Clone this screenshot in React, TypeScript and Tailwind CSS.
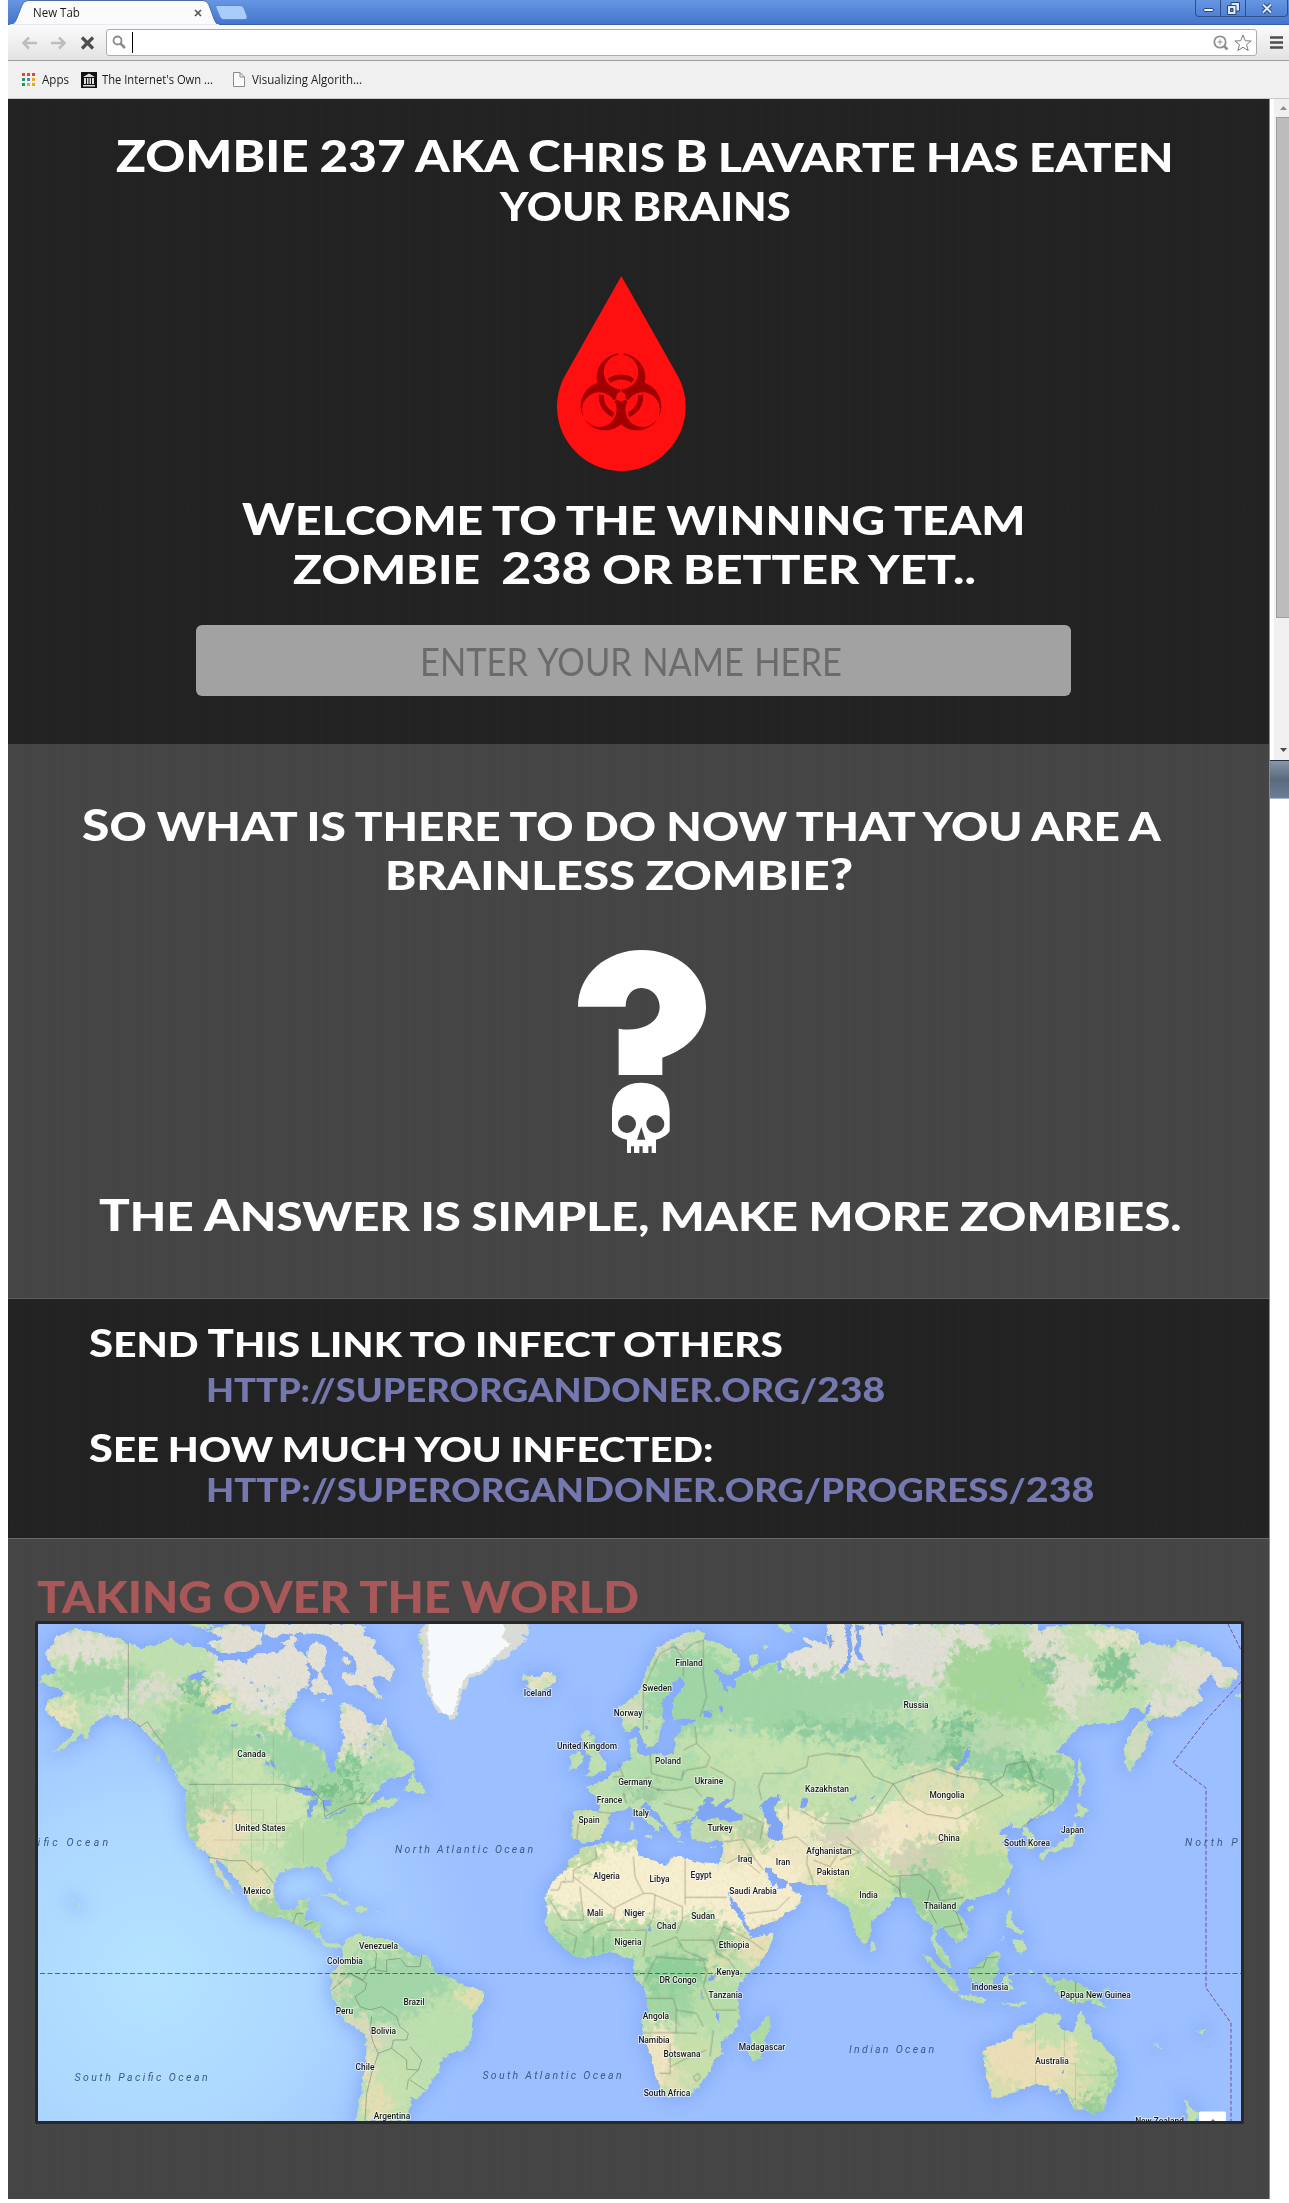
import React, { useLayoutEffect, useRef, useState } from "react";

/* One line of text, stretched horizontally so that it spans exactly `width` pixels. */
function Line({ width, children, className = "" }: { width: number; children: React.ReactNode; className?: string }) {
  const ref = useRef<HTMLSpanElement>(null);
  const [stretch, setStretch] = useState(1);
  useLayoutEffect(() => {
    if (ref.current) setStretch(width / ref.current.offsetWidth);
  }, [width]);
  return (
    <span className={"block whitespace-pre " + className} style={{ width }}>
      <span ref={ref} className="inline-block origin-left" style={{ transform: `scaleX(${stretch})` }}>
        {children}
      </span>
    </span>
  );
}

const Big = ({ children }: { children: React.ReactNode }) => <span className="text-[1.08em] leading-none">{children}</span>;

type Region = "a" | "b" | "c";
const T: Record<Region, string> = {
  a: "translate(-8 -14) scale(.33333)",
  b: "translate(392 -14) scale(.33333)",
  c: "translate(802 -14) scale(.33333 .37807)",
};

const land: [Region, string][] = [
  // North America
  ["a", "M45 130 60 110 72 98 75 80 110 70 125 62 140 52 150 62 180 62 210 70 245 82 270 88 295 98 320 108 340 118 352 105 375 108 385 98 400 95 410 88 425 85 440 100 460 108 470 98 490 110 515 112 540 125 565 140 560 155 590 150 625 150 650 165 655 148 670 150 690 160 725 165 730 150 740 140 760 145 770 130 785 150 800 160 815 155 830 170 840 190 835 230 815 235 800 245 805 262 790 280 770 300 765 345 780 360 790 385 815 392 840 400 865 412 885 425 890 460 905 488 920 480 918 465 915 450 928 425 935 400 945 385 930 350 935 310 930 285 945 280 965 285 985 300 1000 305 1010 330 1035 350 1050 345 1065 325 1075 350 1085 370 1090 390 1100 400 1110 420 1130 430 1150 450 1155 480 1130 492 1110 500 1080 505 1060 520 1040 545 1025 565 1020 580 1040 575 1060 558 1070 570 1110 565 1095 582 1080 595 1060 590 1040 600 1020 605 1000 620 985 640 975 650 955 660 950 670 950 690 945 710 920 728 900 740 885 765 890 780 900 790 905 815 890 810 880 790 875 780 865 768 850 770 830 770 810 775 790 773 770 780 755 785 740 800 733 820 730 840 740 880 760 900 780 900 800 895 808 870 838 868 835 885 830 905 820 930 850 935 875 935 872 960 875 985 900 1005 920 998 935 1005 940 1020 920 1010 905 1015 880 1005 870 985 850 975 840 960 830 955 810 948 790 940 760 925 725 918 700 910 670 898 660 890 655 865 645 845 630 825 615 800 600 785 575 755 560 750 565 770 575 790 590 812 600 825 610 850 590 835 580 815 560 795 550 770 540 750 525 720 500 715 490 690 475 670 470 650 465 625 470 600 465 565 472 540 460 530 445 510 435 490 425 465 410 440 400 420 370 395 350 370 330 350 310 335 295 325 280 325 260 315 240 320 225 315 210 330 195 335 180 360 175 385 160 380 150 370 140 385 130 395 100 415 60 430 80 415 100 400 125 378 135 360 110 355 95 345 80 335 75 320 50 310 45 295 55 270 75 262 95 260 100 240 85 235 60 228 30 215 35 195 60 192 80 185 75 175 60 165Z"],
  ["a", "M530 60 570 50 600 42 650 45 670 60 695 70 698 90 690 105 670 110 650 125 600 130 575 128 555 115 535 102 540 92 580 88 560 75ZM470 42 540 42 555 50 520 56ZM710 42 850 42 830 55 790 75 760 70 730 85 700 70ZM650 148 690 130 740 128 770 110 750 98 770 95 790 75 800 90 790 110 820 130 835 160 800 175 740 180 690 180ZM770 95 790 80 798 100Z"],
  ["a", "M780 42 960 42 1005 50 1000 75 1040 90 1030 110 1040 130 1070 150 1095 180 1085 195 1080 215 1060 200 1040 195 1025 205 1035 235 1060 268 1040 262 1020 245 1000 230 975 222 955 225 935 205 940 190 975 192 985 175 975 150 960 130 940 120 920 95 900 80 870 72 820 70 800 60ZM845 210 858 205 870 185 885 210 905 235 905 255 880 248 855 252 842 240ZM835 110 860 95 885 105 892 130 885 165 868 188 850 175 830 150ZM935 150 945 138 962 150 950 165ZM872 270 885 265 880 278Z"],
  ["a", "M1123 540 1135 515 1152 488 1158 512 1175 520 1187 548 1165 550 1150 545ZM870 855 900 850 930 862 962 882 940 885 905 862ZM975 895 990 888 1018 895 1000 907 980 905ZM1165 80 1185 65 1195 90 1190 108 1170 105ZM380 440 390 440 388 462ZM1035 903 1050 903 1048 909ZM142 880 156 885 150 895ZM122 868 130 868 130 873ZM925 835 935 838 930 842Z"],
  // South America
  ["a", "M900 1095 920 1075 930 1060 940 1035 935 1015 950 990 965 980 990 968 1000 980 1012 975 1035 988 1060 985 1090 990 1105 1005 1130 1025 1160 1040 1190 1033 1205 1060 1215 1090 1260 1100 1285 1118 1310 1130 1340 1135 1358 1145 1365 1165 1345 1195 1328 1215 1325 1250 1325 1280 1312 1305 1300 1320 1265 1328 1240 1345 1228 1365 1225 1390 1205 1410 1195 1435 1180 1450 1162 1465 1138 1460 1148 1485 1135 1500 1135 1540 975 1540 978 1510 985 1490 995 1440 1000 1400 1008 1350 1010 1290 1000 1270 970 1250 945 1235 930 1205 920 1180 905 1155 900 1140 908 1120Z"],
  // Iceland, Britain, Ireland and Mediterranean islands
  ["b", "M275 205 280 190 300 198 315 202 330 198 345 188 360 185 378 200 378 215 360 230 330 243 305 238 285 228 298 218ZM455 378 465 362 482 362 478 375 495 380 488 395 490 412 505 425 515 442 532 462 528 480 500 492 465 500 485 482 470 475 480 458 485 440 470 430 460 405ZM420 435 445 423 460 438 455 455 445 472 415 480 425 460ZM600 640 612 632 610 660 602 662ZM645 680 670 672 665 690ZM740 690 768 698 745 700ZM840 712 858 708 850 715ZM960 135 980 132 985 155 970 178 960 160ZM1000 105 1020 108 1005 120ZM1040 42 1075 42 1090 65 1065 68ZM445 282 450 284 448 288Z"],
  // Europe, Near East and western Russia
  ["b", "M575 325 565 290 590 275 610 260 630 240 640 210 650 180 665 150 680 120 710 95 735 88 760 70 785 65 810 60 828 72 820 85 845 95 870 100 900 115 920 135 930 155 928 180 905 192 880 190 862 178 848 180 865 200 872 220 880 242 892 245 890 225 915 238 920 215 915 205 945 190 960 180 965 190 990 175 1015 160 1045 155 1040 185 1060 180 1050 155 1080 130 1120 115 1150 110 1125 95 1120 80 1140 88 1180 100 1195 110 1205 90 1195 60 1205 42 1245 42 1252 80 1245 110 1260 140 1300 140 1300 880 1248 890 1225 870 1215 845 1200 825 1165 825 1130 825 1110 815 1085 820 1060 808 1040 800 1020 770 1003 772 1012 800 1030 832 1040 820 1045 838 1060 835 1078 815 1085 840 1115 855 1110 880 1095 895 1070 910 1040 930 1000 945 960 960 950 945 945 925 930 895 905 865 885 830 870 790 862 770 872 750 880 720 880 695 850 690 830 700 805 690 785 685 780 660 790 640 760 635 740 645 745 660 755 672 745 690 735 680 720 665 708 645 695 628 675 605 655 580 640 578 635 590 660 618 685 635 700 650 688 648 685 672 668 650 640 625 615 605 600 590 575 605 550 605 535 625 540 640 520 655 515 680 495 695 475 695 455 700 445 688 425 685 425 650 432 620 425 605 450 600 500 605 508 585 500 560 480 545 470 530 500 520 530 510 545 490 565 480 585 455 605 450 600 420 597 390 618 380 622 405 620 430 650 438 680 430 705 438 730 428 738 400 732 385 750 372 755 350 790 340 800 330 760 325 730 330 725 300 735 265 755 240 768 215 750 202 730 215 715 250 692 280 698 310 702 335 690 360 685 390 670 410 650 412 640 395 632 372 620 345 605 360 585 368Z"],
  // Africa and Madagascar
  ["b", "M455 715 470 710 500 705 525 698 560 695 590 695 620 685 625 700 618 715 628 735 650 745 680 755 710 770 720 750 740 738 765 745 800 755 830 762 860 757 870 790 890 830 895 855 905 890 925 915 940 945 955 965 965 985 1000 978 1030 970 1028 990 1010 1030 980 1070 950 1098 930 1120 918 1150 925 1185 928 1225 918 1260 895 1280 870 1295 878 1330 850 1350 845 1375 825 1405 800 1435 780 1455 750 1458 710 1462 698 1450 690 1430 675 1395 665 1340 650 1300 638 1270 635 1235 655 1200 650 1165 640 1130 612 1098 612 1065 608 1045 585 1045 560 1030 530 1025 500 1038 470 1042 440 1045 420 1030 400 1010 380 990 355 965 345 930 355 910 345 870 355 840 370 815 395 790 415 770 415 750 440 735ZM960 1275 985 1255 1000 1230 1015 1215 1022 1245 1005 1295 990 1345 970 1355 955 1330 965 1300Z"],
  // Asia
  ["c", "M-40 38 590 38 605 62 620 45 700 38 780 38 830 48 890 55 900 78 900 90 930 85 960 92 975 92 1000 100 1010 80 1035 82 1060 90 1085 100 1100 110 1130 125 1150 150 1175 152 1198 170 1180 185 1165 205 1135 205 1125 185 1115 165 1105 180 1085 195 1075 215 1090 240 1060 255 1040 262 1020 280 1000 285 970 280 930 290 920 300 935 325 918 350 910 380 895 390 880 415 868 430 855 405 852 370 865 335 890 305 915 285 935 255 925 245 910 275 895 260 870 262 850 290 820 300 780 300 720 305 690 335 670 355 650 375 685 385 703 400 705 440 690 475 680 490 660 515 640 530 610 540 590 550 565 555 555 570 575 590 595 620 580 632 562 630 565 610 550 595 545 578 515 575 520 562 495 575 475 590 500 595 485 615 510 635 500 650 515 680 510 700 490 730 470 745 430 755 400 765 380 768 365 775 350 800 370 815 385 840 383 862 365 875 350 882 340 868 325 862 320 850 305 838 290 850 285 875 305 895 325 920 335 947 315 940 298 920 285 895 275 870 280 845 270 820 250 822 240 810 225 790 215 765 200 760 180 758 160 765 150 785 130 800 110 810 95 825 95 850 85 870 70 885 60 875 50 860 40 830 28 800 22 770 -10 770 -40 750Z"],
  ["c", "M90 885 98 875 108 895 98 907 90 900ZM715 400 722 385 725 420 738 450 725 465 722 495 714 490 718 450 712 430ZM700 545 715 535 712 510 730 522 748 530 725 545ZM600 645 620 632 650 628 660 612 685 605 695 575 705 560 712 580 702 605 698 628 670 630 645 642 625 640 608 662 598 655ZM500 745 507 730 510 738 503 755ZM380 788 400 780 400 790 385 797ZM500 797 517 795 515 820 530 840 550 850 542 860 520 850 505 840 497 830ZM520 870 550 875 558 900 540 910 525 895ZM470 882 495 860 490 868ZM248 910 270 918 290 938 325 960 350 990 355 1010 335 1008 310 985 285 955ZM353 1015 380 1018 410 1022 440 1030 430 1038 390 1034 362 1028ZM445 1038 500 1042 530 1040 562 1035 540 1052 500 1045ZM385 948 405 945 430 930 455 905 472 902 482 915 470 935 478 950 462 975 455 995 430 990 400 985 390 970ZM485 980 500 965 540 955 500 972 520 980 505 985 520 1002 495 1008ZM608 965 635 970 640 985 670 975 705 985 745 1000 765 1020 798 1050 770 1045 745 1032 715 1040 690 1040 670 1020 645 1010 650 995 620 985ZM570 948 580 955 575 965ZM780 1005 815 1000 800 1010ZM940 1145 970 1162 955 1160Z"],
  // Australia and New Zealand
  ["c", "M430 1165 450 1152 480 1145 510 1138 522 1115 545 1098 580 1090 595 1072 620 1065 660 1070 665 1080 650 1098 670 1110 700 1118 710 1090 718 1060 730 1072 735 1090 750 1100 758 1132 785 1145 800 1165 825 1190 833 1225 820 1265 800 1295 795 1320 760 1335 730 1322 705 1325 692 1305 685 1290 670 1265 650 1285 655 1265 635 1275 625 1258 590 1252 560 1262 530 1275 500 1280 480 1292 455 1290 452 1265 440 1235 432 1200ZM1030 1293 1042 1302 1050 1318 1080 1330 1070 1345 1060 1360 1035 1360 1045 1340ZM1070 1115 1100 1108 1085 1125ZM1180 222 1203 225 1203 235Z"],
];

const water: [Region, string][] = [
  ["a", "M788 530 810 532 830 525 850 545 868 560 850 558 820 555 800 545ZM835 575 865 562 858 585 848 590 845 622 832 625ZM878 570 900 570 905 585 890 590 890 608 880 595ZM880 625 915 610 948 595 945 603 910 618 882 630ZM475 215 485 195 520 180 530 185 510 195 525 205 500 212 490 205ZM545 312 560 290 590 282 605 278 595 295 570 308ZM595 355 610 340 630 345ZM705 450 720 460 715 470ZM722 445 735 465 738 480 725 465ZM680 370 692 375 685 390ZM1000 225 1008 225 1006 232ZM575 625 585 632 582 640Z"],
  ["a", "M660 215 666 215 664 222ZM680 240 688 238 684 246ZM700 225 706 230 700 234ZM715 255 722 252 720 262ZM690 270 698 268 694 278ZM728 275 734 280 728 284ZM640 200 646 204 640 206ZM745 200 752 202 746 208ZM705 290 712 292 708 300ZM1010 370 1018 372 1012 378ZM1035 385 1042 390 1036 394ZM1000 400 1008 400 1004 408ZM1060 400 1066 404 1060 408ZM1020 440 1030 442 1022 448Z"],
  ["b", "M798 610 812 590 830 560 850 568 840 578 860 590 875 575 895 568 915 560 895 580 885 590 910 600 935 612 938 630 905 638 875 628 850 625 820 632 800 625ZM990 585 1010 570 1045 555 1052 572 1030 590 1040 620 1058 640 1055 660 1062 688 1040 692 1015 685 1012 660 1020 645 1005 620ZM1110 590 1118 562 1132 565 1130 595ZM820 305 835 298 848 312 842 325 822 320ZM865 290 875 285 880 305 870 300ZM895 355 908 360 900 366ZM650 938 665 960 660 965ZM838 1100 855 1098 852 1110 838 1112ZM812 1135 818 1150 822 1170 815 1160ZM862 1205 868 1215 866 1240 860 1225ZM645 345 655 350 650 362ZM1190 80 1200 70 1210 95 1200 120ZM800 602 792 630 770 640 785 628Z"],
  ["c", "M15 38 35 38 32 70 38 100 32 130 20 162 0 168 10 145 25 130 22 90ZM45 38 75 45 55 55 65 80 60 110 75 138 55 130 42 105 50 85ZM118 38 128 42 125 72 120 60ZM338 420 365 400 382 365 392 362 388 385 370 410 350 425ZM540 180 550 205 545 200ZM30 500 50 488 48 500 35 508ZM200 565 205 570 200 573ZM663 1225 672 1218 672 1230ZM55 542 75 545 60 548ZM215 440 228 436 220 446ZM90 500 105 490 100 500Z"],
];

/* Terrain tints: region, cx, cy, rx, ry, colour. */
const tints: [Region, number, number, number, number, string][] = [
  ["a", 160, 110, 130, 45, "#e2dfd3"], ["a", 220, 210, 140, 50, "#a3d6a6"], ["a", 90, 320, 60, 45, "#e9e2bd"], ["a", 380, 240, 80, 35, "#dbdccb"], ["a", 260, 300, 60, 14, "#e2e2d8"],
  ["a", 350, 370, 60, 20, "#cfd8c4"], ["a", 500, 240, 50, 32, "#7fc394"], ["a", 720, 200, 170, 110, "#e4e1d7"], ["a", 620, 90, 110, 50, "#e2dfd3"],
  ["a", 860, 60, 200, 60, "#e4e1d7"], ["a", 1000, 170, 120, 110, "#e4e1d7"], ["a", 1000, 350, 100, 85, "#e6e1d2"], ["a", 870, 150, 80, 120, "#e4e1d7"],
  ["a", 570, 260, 50, 25, "#eae3bf"], ["a", 740, 350, 50, 22, "#eae3bf"], ["a", 840, 405, 55, 14, "#eee5b8"], ["a", 700, 410, 160, 55, "#9fd5a7"],
  ["a", 500, 330, 90, 60, "#abd9a0"], ["a", 450, 400, 70, 80, "#a2d3a4"], ["a", 640, 475, 90, 50, "#cbe2b1"], ["a", 850, 470, 130, 50, "#9ed4a5"],
  ["a", 930, 545, 90, 25, "#73bd88"], ["a", 960, 470, 45, 22, "#7cc290"], ["a", 1050, 390, 50, 32, "#b9d9b3"], ["a", 1040, 490, 80, 30, "#a5d8a9"],
  ["a", 720, 620, 130, 90, "#cfe5b4"], ["a", 570, 660, 80, 95, "#e9dfb9"], ["a", 485, 610, 22, 100, "#9fcf9f"], ["a", 560, 575, 50, 30, "#b0d3a5"],
  ["a", 860, 700, 110, 80, "#b2dba6"], ["a", 940, 600, 60, 50, "#a0d2a0"], ["a", 640, 790, 60, 60, "#d9dfb0"], ["a", 720, 900, 90, 30, "#a6d3a0"], ["a", 690, 820, 30, 50, "#e8dfb5"], ["a", 850, 930, 60, 50, "#a4d6a1"],
  ["a", 1080, 1130, 190, 100, "#a2d6a9"], ["a", 1060, 1010, 110, 30, "#bddfad"], ["a", 1260, 1250, 100, 110, "#bce0ae"], ["a", 1330, 1160, 35, 35, "#dfdfae"],
  ["a", 1030, 1290, 40, 40, "#d6d9bb"], ["a", 985, 1250, 50, 20, "#dfd9bd"], ["a", 1020, 1420, 20, 120, "#e7dfb8"], ["a", 1090, 1430, 60, 90, "#c6e2ae"], ["a", 1050, 1490, 30, 60, "#e5deb2"], ["a", 925, 1110, 16, 60, "#d9dcb8"],
  ["b", 720, 110, 80, 40, "#d3dcc0"], ["b", 610, 300, 40, 40, "#d5dcbf"], ["b", 780, 240, 130, 130, "#9fd6a5"], ["b", 330, 215, 50, 25, "#e6e3c4"],
  ["b", 1060, 270, 220, 100, "#a0d5a6"], ["b", 1150, 140, 90, 50, "#e5e3d9"], ["b", 1220, 80, 40, 60, "#e5e3d9"], ["b", 1140, 350, 110, 22, "#8ccb9c"], ["b", 1000, 440, 220, 60, "#c6e2ae"],
  ["b", 1150, 510, 140, 70, "#c4e1af"], ["b", 700, 490, 150, 60, "#b4dda9"], ["b", 640, 550, 60, 22, "#9dcaa0"], ["b", 480, 650, 60, 40, "#d0dfae"],
  ["b", 860, 655, 100, 30, "#c0d8aa"], ["b", 1090, 640, 90, 50, "#efe8c4"], ["b", 1080, 750, 110, 70, "#f0e7c4"], ["b", 1200, 600, 60, 20, "#b9d8a4"], ["b", 980, 660, 50, 30, "#b2cfa4"], ["b", 1220, 690, 60, 40, "#d8d3bb"],
  ["b", 980, 850, 150, 120, "#f6edcd"], ["b", 920, 720, 50, 40, "#e8e3b9"], ["b", 990, 690, 20, 40, "#b8d3a4"], ["b", 1200, 790, 60, 60, "#ebe3bb"],
  ["b", 620, 820, 310, 110, "#f8efcf"], ["b", 440, 740, 60, 35, "#bfdaa4"], ["b", 560, 700, 80, 14, "#b8d8a2"], ["b", 620, 985, 340, 50, "#b6dca8"], ["b", 460, 1010, 100, 40, "#9ed4a0"],
  ["b", 740, 1090, 110, 60, "#8fcf99"], ["b", 720, 1180, 90, 50, "#a0d5a2"], ["b", 930, 990, 110, 40, "#cde0ab"], ["b", 990, 1010, 60, 60, "#e7dfb5"], ["b", 880, 1000, 40, 60, "#a6d2a0"], ["b", 870, 1180, 80, 90, "#b7dda9"], ["b", 870, 1060, 40, 30, "#dadfae"],
  ["b", 685, 1340, 50, 110, "#f0e4c1"], ["b", 790, 1350, 70, 90, "#c8e0ac"], ["b", 730, 1420, 40, 30, "#dfdfb4"], ["b", 1000, 1280, 45, 80, "#addaa3"], ["b", 130, 1160, 40, 40, "#e4dfae"],
  ["c", 100, 90, 240, 80, "#e5e3d9"], ["c", 230, 130, 90, 90, "#e0ded6"], ["c", 380, 70, 60, 50, "#e2e0d6"], ["c", 60, 220, 170, 60, "#a2d5a8"], ["c", 90, 320, 150, 28, "#90cca0"],
  ["c", 370, 170, 60, 80, "#a5d59a"], ["c", 500, 190, 140, 110, "#a3d597"], ["c", 590, 260, 90, 50, "#a5d699"], ["c", 300, 370, 150, 55, "#a9d6aa"], ["c", 360, 305, 60, 20, "#76bf8c"], ["c", 340, 380, 50, 30, "#80c492"], ["c", 150, 390, 60, 16, "#84c696"], ["c", 470, 330, 80, 40, "#bcd9b0"], ["c", 620, 90, 60, 60, "#e0dfcf"], ["c", 700, 200, 70, 80, "#dedfcd"], ["c", 620, 150, 30, 40, "#8cc99a"],
  ["c", 830, 70, 90, 25, "#e6e2cb"], ["c", 830, 160, 60, 48, "#83c594"], ["c", 960, 150, 90, 60, "#d2dec4"], ["c", 1090, 160, 110, 60, "#e1dfd2"], ["c", 1000, 250, 90, 35, "#e0dfd2"], ["c", 890, 340, 40, 70, "#d1dcc0"], ["c", 760, 260, 60, 35, "#c9dbba"],
  ["c", 50, 420, 120, 50, "#c7e2af"], ["c", 480, 410, 90, 40, "#9ad0a2"], ["c", 560, 430, 40, 45, "#7dc28d"], ["c", 650, 450, 50, 60, "#98cf9f"], ["c", 300, 470, 120, 60, "#dfe0b4"], ["c", 540, 500, 60, 40, "#cfe2ad"], ["c", 430, 530, 60, 50, "#cce0ac"],
  ["c", 230, 570, 190, 60, "#f2e7c4"], ["c", 130, 610, 80, 55, "#f3e9c8"], ["c", 80, 600, 50, 40, "#dfd9bd"], ["c", 300, 650, 120, 50, "#c3d5ac"], ["c", 420, 620, 110, 50, "#cfdfaa"], ["c", 420, 690, 100, 60, "#b6dca2"], ["c", 210, 660, 60, 30, "#d5d2b8"], ["c", 320, 720, 50, 35, "#dadcae"],
  ["c", 80, 720, 90, 50, "#cde2a8"], ["c", 60, 820, 50, 60, "#b5dca0"], ["c", 10, 660, 30, 40, "#f0e8bb"], ["c", 250, 740, 80, 60, "#9dcf9c"], ["c", 330, 820, 70, 60, "#a5d6a2"], ["c", 430, 950, 60, 60, "#9fd5a2"], ["c", 300, 960, 70, 60, "#a8d8a5"], ["c", 700, 1010, 110, 50, "#a6d7a2"],
  ["c", 580, 1190, 150, 90, "#ecdfb7"], ["c", 640, 1110, 80, 45, "#c6e0ae"], ["c", 770, 1200, 60, 110, "#c3e0aa"], ["c", 750, 1310, 50, 30, "#97cc97"], ["c", 700, 1260, 40, 50, "#dbdfae"], ["c", 470, 1265, 50, 35, "#d9deae"], ["c", 820, 1230, 15, 60, "#9fd29c"],
];

const borders: [Region, string][] = [
  ["a", "M295 98V322L330 350 352 335 375 370 405 408M475 523H760L800 535 845 540 880 575 885 620 940 590 975 580H1000L1030 545M535 742 600 752 645 752 680 785 695 775 730 818M790 940 800 910H820M820 950 850 935M1010 1000 1040 1030 1035 1080 1070 1085 1070 1050 1110 1045 1130 1070 1170 1070 1175 1035M930 1095 960 1090 1000 1110 1015 1080 1040 1070M905 1140 940 1110 960 1090 1010 1120 1005 1140 975 1160 990 1190 1020 1200 1055 1190 1100 1220 1110 1250 1135 1270 1130 1290 1090 1290 1085 1315 1045 1330 1030 1300 1020 1260 1025 1220M1085 1315 1130 1350 1130 1378 1165 1380 1175 1350 1140 1310M1165 1380 1135 1410 1130 1440M1140 1410 1185 1440M1045 1330 1025 1390 1010 1450 1005 1530"],
  ["b", "M640 360 640 240 665 180 690 130 730 110 760 125 790 100 820 90M820 90 820 200 830 260 810 320M735 110 760 150V200M795 350 800 400 840 440 830 470 770 480 755 500M760 420 800 400M660 435 665 490 700 500 755 510 760 480M840 470 880 490 915 515 910 560M565 460 580 500 550 500M580 550 590 580M500 605 545 610M445 640 440 690M680 540 740 540 790 530 815 560M700 580 740 590 790 600M730 640 780 630M660 500 640 510 660 530 690 540M985 530 1000 490 1080 490 1130 470 1135 440 1190 430 1260 440M985 530 995 570M1075 580V630M1110 600 1180 640 1260 640M1055 690 1100 680 1135 710 1130 760 1150 820M1150 750 1200 770 1230 720M880 695 940 688 970 740 1000 780M940 610 1000 640 990 690M890 760 930 740 990 790M950 910 1040 900 1080 860M430 800 550 895 640 850 665 850M430 780 500 745 495 710M610 740 615 800 640 850M765 750V885M765 862H890M450 830 460 930H395L360 870M555 895 550 930 500 945 460 970M665 850 757 890V930L740 970M675 855 670 920 655 950M530 960H650L640 1040M665 1010 740 980 760 1020 830 1050M750 990H850L860 1030 900 1050M860 1000 880 950 960 990 1000 1020M400 960 440 980 430 1030M490 980V1035M520 980V1025M640 1120 680 1040 730 1045 820 1050 830 1090M650 1165H730L740 1200 800 1210 820 1250M830 1090 820 1130 850 1200 920 1200M738 1200V1270M640 1268H740L800 1270M720 1300V1390H690M720 1370 780 1340 830 1320M790 1400 805 1390 810 1405 798 1415ZM850 1260 840 1340M895 1050 935 1100M360 840H385L395 815H430V780"],
  ["c", "M-5 380 60 390 100 440 160 460 130 500 100 540 40 560 0 550M160 460 200 510 260 540 350 552 400 530 490 490 450 460 490 440M160 460 220 440 290 420 360 440 450 450M490 440 500 410 560 400 580 450 640 475 640 510 600 540 545 575M20 600 80 650 150 705 240 700 280 730 300 770 370 760M80 680 175 735 185 760M180 705V755M0 620 60 640 0 660M270 740 260 780 290 830M300 770 350 800 370 850M310 840 370 830M385 948 430 945 440 920 475 918M707 985V1042M290 620 320 610"],
];

const stateLines: [Region, string][] = [
  ["a", "M607 340V522M730 380V522M550 522V600H700V720M607 600V690M665 530V780M740 560V720M665 640H790M700 690H770M820 650V760M550 690H700"],
  ["c", "M587 1095V1250M673 1105V1200M707 1200V1325M673 1200H707M707 1230H830"],
];

const labels: [number, number, string][] = [
  [213.5, 132.5, "Canada"], [222.5, 206.5, "United States"], [219, 269.5, "Mexico"], [340.5, 324.5, "Venezuela"], [307, 339.5, "Colombia"], [376, 381, "Brazil"], [306.5, 389.5, "Peru"],
  [345.5, 409.5, "Bolivia"], [327, 445.5, "Chile"], [354, 494.5, "Argentina"], [499.5, 72, "Iceland"], [651, 42, "Finland"], [619, 67, "Sweden"], [590, 92, "Norway"],
  [549, 124.5, "United Kingdom"], [630, 139.5, "Poland"], [597, 161, "Germany"], [671, 159.5, "Ukraine"], [571.5, 178.5, "France"], [603, 191.5, "Italy"], [551, 198.5, "Spain"],
  [682, 207, "Turkey"], [789, 167.5, "Kazakhstan"], [568.5, 254.5, "Algeria"], [621.5, 258, "Libya"], [663, 253.5, "Egypt"], [707, 237.5, "Iraq"], [745, 241, "Iran"],
  [791, 230, "Afghanistan"], [795, 251, "Pakistan"], [715, 269.5, "Saudi Arabia"], [557, 292, "Mali"], [596.5, 292, "Niger"], [665, 294.5, "Sudan"], [628.5, 305, "Chad"],
  [590, 320.5, "Nigeria"], [696, 323.5, "Ethiopia"], [690, 351, "Kenya"], [640, 358.5, "DR Congo"], [687.5, 374, "Tanzania"], [618, 395, "Angola"], [616, 418.5, "Namibia"],
  [644, 433, "Botswana"], [629, 471.5, "South Africa"], [724, 426, "Madagascar"], [878, 84, "Russia"], [909, 174, "Mongolia"], [911, 216.5, "China"], [1034.5, 209, "Japan"],
  [989, 221.5, "South Korea"], [830.5, 273.5, "India"], [902, 284.5, "Thailand"], [952, 366, "Indonesia"], [1057.5, 373.5, "Papua New Guinea"], [1014, 439.5, "Australia"], [1121.5, 500, "New Zealand"],
];

const oceans: [number, number, string, number][] = [
  [-27, 222, "Pacific Ocean", 97], [36.5, 456.5, "South Pacific Ocean", 133], [357, 229, "North Atlantic Ocean", 138],
  [444.5, 454.5, "South Atlantic Ocean", 139], [811, 429, "Indian Ocean", 85], [1147, 221.5, "North Pacific", 92],
];

function WorldMap() {
  return (
    <svg className="block h-[497px] w-[1203px]" viewBox="0 0 1203 497" preserveAspectRatio="none">
      <defs>
        <radialGradient id="pacific" gradientUnits="userSpaceOnUse" cx="115" cy="350" r="330">
          <stop offset="0" stopColor="#b4e3ff" />
          <stop offset="0.45" stopColor="#aed8ff" />
          <stop offset="1" stopColor="#9cbfff" />
        </radialGradient>
        <clipPath id="landClip">
          {land.map(([r, d], i) => <path key={i} d={d} transform={T[r]} />)}
        </clipPath>
        <filter id="shelf" x="-5%" y="-5%" width="110%" height="110%"><feGaussianBlur stdDeviation="9" /></filter>
        <filter id="soft" x="-5%" y="-5%" width="110%" height="110%">
          <feGaussianBlur stdDeviation="3" result="b" />
          <feTurbulence type="fractalNoise" baseFrequency="0.13" numOctaves="4" seed="7" result="n" />
          <feDisplacementMap in="b" in2="n" scale="42" xChannelSelector="R" yChannelSelector="G" />
        </filter>
        <filter id="coast" x="0" y="0" width="100%" height="100%">
          <feTurbulence type="fractalNoise" baseFrequency="0.22" numOctaves="2" seed="3" result="n" />
          <feDisplacementMap in="SourceGraphic" in2="n" scale="5" xChannelSelector="R" yChannelSelector="G" />
        </filter>
        <filter id="forest" x="0" y="0" width="100%" height="100%">
          <feTurbulence type="fractalNoise" baseFrequency="0.08" numOctaves="5" seed="12" />
          <feColorMatrix values="0 0 0 0 0.36  0 0 0 0 0.68  0 0 0 0 0.46  5 0 0 0 -2.8" />
        </filter>
        <filter id="grain" x="0" y="0" width="100%" height="100%">
          <feTurbulence type="fractalNoise" baseFrequency="0.35" numOctaves="3" seed="4" />
          <feColorMatrix values="0 0 0 0 0.5  0 0 0 0 0.55  0 0 0 0 0.42  2 0 0 0 -0.95" />
        </filter>
      </defs>
      <rect width="1203" height="497" fill="url(#pacific)" />
      <g filter="url(#shelf)" fill="#7fa5fa" opacity="0.85">
        {land.map(([r, d], i) => <path key={i} d={d} transform={T[r]} stroke="#7fa5fa" strokeWidth="18" />)}
      </g>
      <g filter="url(#coast)">
        <g clipPath="url(#landClip)">
          <rect width="1203" height="497" fill="#bfe0b0" />
          <g filter="url(#soft)">
            {tints.map(([r, x, y, rx, ry, c], i) => <ellipse key={i} cx={x} cy={y} rx={rx} ry={ry} fill={c} transform={T[r]} />)}
          </g>
          <rect y="60" width="1203" height="110" filter="url(#forest)" opacity="0.45" />
          <rect width="1203" height="497" filter="url(#grain)" opacity="0.24" />
        </g>
        <path transform={T.b} d="M-5 30 290 30 298 75 270 72 290 88 262 112 240 130 222 148 195 150 180 172 150 195 115 205 108 230 95 250 88 280 80 290 82 318 70 328 60 330 45 305 25 310 10 285 0 270 -15 220 -25 190 -20 160 -25 130 -20 90 -35 75Z" fill="#d9dcd6" />
        <path transform={T.b} d="M0 30 215 30 225 60 215 85 240 100 200 135 150 185 110 195 85 250 75 300 60 320 30 298 8 265 -5 210 -2 130 -8 70Z" fill="#f5f9fc" />
        {water.map(([r, d], i) => <path key={i} d={d} transform={T[r]} fill="#7ea6f5" />)}
      </g>
      <g fill="none" stroke="#6b6f62" strokeOpacity="0.75" strokeWidth="2">
        {borders.map(([r, d], i) => <path key={i} d={d} transform={T[r]} />)}
      </g>
      <g fill="none" stroke="#8a8c7d" strokeOpacity="0.45" strokeWidth="1.6">
        {stateLines.map(([r, d], i) => <path key={i} d={d} transform={T[r]} />)}
      </g>
      <g fill="none" stroke="#75508c" strokeWidth="1">
        <path d="M2 349.5H1203" strokeDasharray="5 2.5" />
        <path d="M1190 0 1203 26M1203 58 1168 96 1135 139 1168 164V364L1193 399V497" strokeDasharray="4 2" />
      </g>
      <g fontFamily="Roboto, sans-serif" fontSize="8.4" textAnchor="middle" fill="#17191c" stroke="#ffffff" strokeOpacity="0.6" strokeWidth="2" paintOrder="stroke" strokeLinejoin="round" fontWeight="500">
        {labels.map(([x, y, t]) => <text key={t} x={x} y={y}>{t}</text>)}
      </g>
      <g fontFamily="Roboto, sans-serif" fontSize="10.5" fontStyle="italic" fontWeight="400" fill="#3d5a86">
        {oceans.map(([x, y, t, w]) => <text key={t} x={x} y={y} textLength={w}>{t}</text>)}
      </g>
      <rect x="1161" y="487.500" width="27" height="12" rx="1.5" fill="#fff" />
      <path d="M1173 497l2-2 2 2z" fill="#777" />
    </svg>
  );
}

function BloodDrop() {
  return (
    <svg className="ml-[549px] block h-[196px] w-[129px]" viewBox="51 48 387 588">
      <mask id="bio" maskUnits="userSpaceOnUse" x="100" y="260" width="290" height="270">
        <g fill="#fff"><circle cx="243" cy="353" r="73" /><circle cx="195" cy="438" r="73" /><circle cx="291" cy="438" r="73" /></g>
        <g fill="#000"><circle cx="243" cy="336" r="52" /><circle cx="178" cy="449" r="52" /><circle cx="308" cy="449" r="52" /><circle cx="243" cy="410" r="14" /></g>
        <g stroke="#000" strokeWidth="4"><path d="M243 410V384M243 410 221 423M243 410 265 423" /></g>
        <g stroke="#000" strokeWidth="16"><path d="M243 300V270M150 464 118 482M336 464 368 482" /></g>
      </mask>
      <clipPath id="rings"><circle cx="243" cy="336" r="45" /><circle cx="178" cy="449" r="45" /><circle cx="308" cy="449" r="45" /></clipPath>
      <path fill="#ff0f0f" d="M244 48 408 338A193 193 0 1 1 80 338Z" />
      <rect x="100" y="260" width="290" height="270" fill="#a00000" mask="url(#bio)" />
      <circle cx="243" cy="410" r="59" fill="none" stroke="#a00000" strokeWidth="15" clipPath="url(#rings)" />
    </svg>
  );
}

function SkullQuestion() {
  return (
    <svg className="ml-[570px] block h-[203px] w-[128px]" viewBox="54 60 384 609" fill="#fff">
      <path d="M54 230C54 133 140 60 245 60 352 60 438 132 438 230 438 305 378 360 307 383V435H176V296C250 308 299 275 299 230 299 199 275 174 245 174 217 174 197 195 197 230Z" />
      <path fillRule="evenodd" d="M156 545C156 492 190 458 243 458S329 492 329 545V603C320 617 305 625 288 629V669H275V649H265V669H248V649H238V669H222V649H213V669H201V629C181 625 166 617 156 603ZM174 582a27 27 0 1 0 54 0 27 27 0 1 0-54 0M259 582a27 27 0 1 0 54 0 27 27 0 1 0-54 0M244 591 231 629H256Z" />
    </svg>
  );
}

const appDots = ["#d9493c", "#d9493c", "#d9493c", "#1e9a5a", "#4080e8", "#e9a912", "#1e9a5a", "#e9a912", "#e9a912"];

function BrowserChrome() {
  return (
    <header className="ml-2 font-['Open_Sans',sans-serif] text-[12px] text-[#1c1c1c]">
      <div className="flex h-[25px] border-b border-[#3b5f9f] bg-linear-to-b from-[#6696e2] to-[#4475cd]">
        <div className="relative -mb-px h-[25px] w-[212px]">
          <svg className="absolute inset-0" width="212" height="25">
            <path d="M0 25C5 25 7 23 9 18L14 5Q16 .5 20 .5H195Q199 .5 201 5L206 19Q208 25 212 25Z" fill="#fbfbfb" stroke="#4c6ea8" />
            <path d="M2 25H211" stroke="#fbfbfb" strokeWidth="1.5" />
          </svg>
          <div className="absolute top-[4px] left-[25px] text-[12px] leading-[18px]"><Line width={47}>New Tab</Line></div>
          <svg className="absolute top-[9px] left-[186px]" width="8" height="8"><path d="M1 1 7 7M7 1 1 7" stroke="#555" strokeWidth="1.7" /></svg>
        </div>
        <svg className="mt-[5px] -ml-[5px]" width="34" height="16"><path d="M2 .5H25Q28 .5 29 3L32 11Q33 14.500 30 14.500H9Q6 14.500 5 12L1 3Q0 .5 2 .5Z" fill="#a9cdfb" stroke="#5b88cf" /></svg>
        <div className="mr-[1px] ml-auto flex h-[17px] w-[93px] rounded-b border border-t-0 border-[#2f4f8c]">
          <div className="flex w-[25px] items-end justify-center border-r border-[#2f4f8c] pb-1"><div className="h-1 w-[11px] rounded-sm border border-[#2c4777] bg-white" /></div>
          <div className="flex w-[25px] items-center justify-center border-r border-[#2f4f8c]">
            <svg width="13" height="13"><g fill="#dce9ff" stroke="#2c4777"><path d="M4 .5H12.500V9H4Z" /><path d="M.5 3.500H9V12.500H.5Z" /><path d="M3.500 6.500H6V9.500H3.500Z" fill="#4f7fd3" /></g></svg>
          </div>
          <div className="flex flex-1 items-center justify-center"><svg width="12" height="11"><path d="M2 1.500 10 9.500M10 1.500 2 9.500" stroke="#2c4777" strokeWidth="4" /><path d="M2 1.500 10 9.500M10 1.500 2 9.500" stroke="#dce9ff" strokeWidth="2" /></svg></div>
        </div>
      </div>
      <div className="flex h-9 items-center border-b border-[#a0a0a0] bg-linear-to-b from-[#fbfbfb] to-[#e3e3e3]">
        <svg className="ml-[13px]" width="78" height="16" fill="none">
          <path d="M16 8H2.500M8 2.500 2.500 8 8 13.500" stroke="#bdbdbd" strokeWidth="2.500" />
          <path d="M30 8H43.500M38 2.500 43.500 8 38 13.500" stroke="#bdbdbd" strokeWidth="2.500" />
          <path d="M61 2.500 72 13.500M72 2.500 61 13.500" stroke="#4d4d4d" strokeWidth="3.200" />
        </svg>
        <div className="ml-[7px] flex h-[27px] w-[1151px] items-center rounded-[3px] border border-[#acacac] bg-white">
          <svg className="ml-[5px]" width="15" height="15" fill="none" stroke="#8a8a8a"><circle cx="5.500" cy="5.500" r="4" strokeWidth="1.800" /><path d="M8.500 8.500 13 13" strokeWidth="2.500" /></svg>
          <div className="ml-[5px] h-[21px] w-px bg-black" />
          <svg className="ml-auto" width="16" height="16" fill="none" stroke="#8f8f8f"><circle cx="7" cy="7" r="5.700" strokeWidth="1.800" /><path d="M11 11 14.500 14.500" strokeWidth="2.600" /><path d="M4.300 7H9.700M7 4.300V9.700" /></svg>
          <svg className="mr-[4px] ml-[5px]" width="18" height="18" fill="#fff" stroke="#7d7d7d"><path d="M9 1 11.200 6.700 17.200 7 12.500 10.700 14.200 16.600 9 13.200 3.800 16.600 5.500 10.700 .8 7 6.800 6.700Z" /></svg>
        </div>
        <svg className="ml-[13px]" width="13" height="13"><path d="M0 1.500H13M0 6.500H13M0 11.500H13" stroke="#4d4d4d" strokeWidth="2.600" /></svg>
      </div>
      <div className="flex h-[38px] items-center border-b border-[#c8c8c8] bg-[#f0f0f0] text-[12px]">
        <div className="ml-[14px] grid grid-cols-3 gap-[2px]">
          {appDots.map((c, i) => <i key={i} className="block h-[3px] w-[3px]" style={{ backgroundColor: c }} />)}
        </div>
        <Line width={27} className="ml-[7px]">Apps</Line>
        <svg className="ml-3" width="16" height="16"><rect width="16" height="16" fill="#111" /><path d="M2 5 8 1.500 14 5ZM3 6H5V12H3ZM6 6H7.500V12H6ZM8.500 6H10V12H8.500ZM11 6H13V12H11ZM2 13H14V14.500H2Z" fill="#ddd" /></svg>
        <Line width={111} className="ml-[5px]">The Internet's Own ...</Line>
        <svg className="ml-5" width="12" height="15"><path d="M.5 .5H7L11.500 5V14.500H.5ZM7 .5V5H11.500" fill="#fafafa" stroke="#8c8c8c" /></svg>
        <Line width={110} className="ml-[7px]">Visualizing Algorith...</Line>
      </div>
    </header>
  );
}

const stripes = "bg-[repeating-linear-gradient(90deg,rgba(0,0,0,0.018)_0_1px,transparent_1px_4px,rgba(255,255,255,0.005)_4px_6px,transparent_6px_11px)]";

export default function App() {
  return (
    <div className="h-[2203px] w-[1289px] overflow-hidden bg-white">
      <BrowserChrome />
      <div className="flex">
        <main className="ml-2 h-[2100px] w-[1262px] border-r border-[#8c8c8c] font-[Lato,'Liberation_Sans',sans-serif] font-black text-white [word-spacing:-0.04em]">
          <section className={"h-[645px] bg-[#222222] pt-[33px] text-[40.500px] leading-[49px] " + stripes}>
            <Line width={1057} className="ml-[108px]"><Big>ZOMBIE 237 AKA C</Big>HRIS <Big>B</Big> LAVARTE HAS EATEN</Line>
            <Line width={291} className="ml-[492px]">YOUR BRAINS</Line>
            <div className="pt-[46px] pb-[23px]"><BloodDrop /></div>
            <Line width={783} className="ml-[234px]"><Big>W</Big>ELCOME TO THE WINNING TEAM</Line>
            <Line width={683} className="ml-[285px]">{"ZOMBIE  "}<Big>238</Big> OR BETTER YET..</Line>
            <div className="mt-[32px] ml-[188px] flex h-[71px] w-[875px] items-center rounded-md bg-[#a2a2a2] pt-[2px] text-[39px] font-normal text-[#6b6b6b] [word-spacing:0.05em]">
              <Line width={422} className="ml-[224px]">ENTER YOUR NAME HERE</Line>
            </div>
          </section>
          <section className={"h-[555px] border-b border-[#5c5c5c] bg-[#454545] pt-[57px] text-[40.500px] leading-[49px] " + stripes}>
            <Line width={1079} className="ml-[74px]"><Big>S</Big>O WHAT IS THERE TO DO NOW THAT YOU ARE A</Line>
            <Line width={468} className="ml-[377px]">BRAINLESS ZOMBIE<Big>?</Big></Line>
            <div className="pt-[51px] pb-[38px]"><SkullQuestion /></div>
            <Line width={1082} className="ml-[91px]"><Big>T</Big>HE <Big>A</Big>NSWER IS SIMPLE, MAKE MORE ZOMBIES.</Line>
          </section>
          <section className={"h-[240px] border-b border-[#6a6a6a] bg-[#222222] pt-[24px] text-[35px] leading-[40px] " + stripes}>
            <Line width={694} className="ml-[81px]"><Big>S</Big>END <Big>T</Big>HIS LINK TO INFECT OTHERS</Line>
            <Line width={679} className="mt-[7px] ml-[198px] text-[32px] text-[#7478ae]">HTTP://SUPERORGAN<Big>D</Big>ONER.ORG/<Big>238</Big></Line>
            <Line width={625} className="mt-[18px] ml-[81px]"><Big>S</Big>EE HOW MUCH YOU INFECTED:</Line>
            <Line width={888} className="mt-[2px] ml-[198px] text-[32px] text-[#7478ae]">HTTP://SUPERORGAN<Big>D</Big>ONER.ORG/PROGRESS/<Big>238</Big></Line>
          </section>
          <section className={"h-[660px] bg-[#454545] pt-[33px] text-[43px] leading-[49px] text-[#a85858] " + stripes}>
            <Line width={602} className="ml-[29px]">TAKING OVER THE WORLD</Line>
            <div className="ml-[27px] h-[503px] w-[1209px] overflow-hidden rounded-xs border-3 border-[#282828] [word-spacing:0]">
              <WorldMap />
            </div>
          </section>
        </main>
        <aside className="w-[19px]">
          <div className="ml-[4px] h-[661px] bg-[#f0f0f0]">
            <div className="flex h-[18px] items-center pl-[6px]"><svg width="7" height="4"><path d="M0 4 3.500 0 7 4Z" fill="#8c8c8c" /></svg></div>
            <div className="ml-[2px] h-[501px] border border-r-0 border-[#9d9d9d] bg-[#bcbcbc]" />
            <div className="mt-[130px] pl-[6px]"><svg width="7" height="4"><path d="M0 0H7L3.500 4Z" fill="#4a4a4a" /></svg></div>
          </div>
          <div className="h-[39px] border-t border-b border-t-[#26303a] border-b-[#a8b6c6] bg-linear-to-b from-[#8797a8] via-[#586a7e] to-[#6c7f95]" />
        </aside>
      </div>
    </div>
  );
}
